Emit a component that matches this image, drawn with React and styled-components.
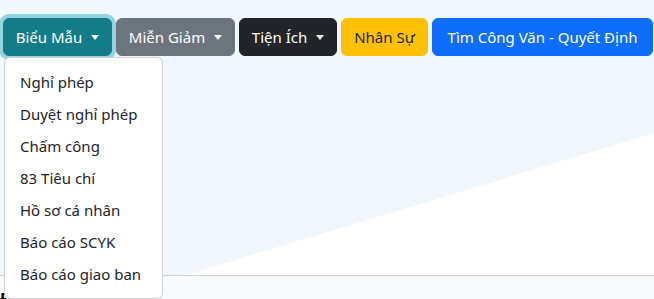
import React from 'react'
import styled, { createGlobalStyle } from 'styled-components'

const GlobalStyle = createGlobalStyle`
  html, body {
    margin: 0;
    padding: 0;
    background: #ffffff;
    font-family: "Noto Sans", "Open Sans", sans-serif;
    color: #212529;
  }
`;

const Page = styled.div`
  width: 654px;
  height: 299px;
  overflow: hidden;
  display: flex;
  flex-direction: column;
`;

const Hero = styled.section`
  position: relative;
  flex-shrink: 0;
  height: 275px;
  border-bottom: 1px solid #cfd2d5;
  background: #ffffff;

  &::before {
    content: '';
    position: absolute;
    inset: 0;
    background: #f0f7ff;
    clip-path: polygon(0 0, 100% 0, 100% 48.4%, 28.4% 100%, 0 100%);
  }
`;

const Toolbar = styled.nav`
  position: relative;
  display: flex;
  gap: 4px;
  padding: 18px 0 0 3px;
`;

const ButtonWrap = styled.div`
  position: relative;
`;

const palette = {
  info: { bg: '#127c88', fg: '#ffffff', ring: 'rgba(58, 176, 195, 0.5)' },
  secondary: { bg: '#6c757d', fg: '#ffffff' },
  dark: { bg: '#212529', fg: '#ffffff' },
  warning: { bg: '#ffc107', fg: '#212529' },
  primary: { bg: '#0d6efd', fg: '#ffffff' },
};

const Button = styled.button`
  display: flex;
  align-items: center;
  justify-content: center;
  box-sizing: border-box;
  width: ${p => p.$w}px;
  height: 38px;
  padding: 0 12px;
  border: 1px solid ${p => palette[p.$tone].bg};
  border-radius: 6px;
  background: ${p => palette[p.$tone].bg};
  color: ${p => palette[p.$tone].fg};
  font-family: inherit;
  font-size: 15px;
  line-height: 24px;
  white-space: nowrap;
  box-shadow: ${p => (p.$focus ? `0 0 0 4px ${palette[p.$tone].ring}` : 'none')};
`;

const Caret = styled.span`
  display: inline-block;
  margin-left: 9px;
  width: 0;
  height: 0;
  border-top: 5px solid currentColor;
  border-left: 4px solid transparent;
  border-right: 4px solid transparent;
`;

const Menu = styled.ul`
  position: absolute;
  top: 39px;
  left: 1px;
  z-index: 10;
  box-sizing: border-box;
  width: 159px;
  margin: 0;
  padding: 8px 0;
  list-style: none;
  background: #ffffff;
  border: 1px solid rgba(0, 0, 0, 0.175);
  border-radius: 6px;
`;

const MenuItem = styled.li`
  padding: 4px 15px;
  font-size: 15px;
  line-height: 24px;
  color: #212529;
  white-space: nowrap;
`;

const Footer = styled.footer`
  flex: 1;
  background: #f8f9fa;
  padding: 13px 0 0 0;
`;

const FooterTitle = styled.div`
  font-weight: 700;
  font-size: 16px;
  line-height: 20px;
  color: #000000;
`;

const buttons = [
  { label: 'Biểu Mẫu', tone: 'info', w: 109, caret: true, focus: true },
  { label: 'Miễn Giảm', tone: 'secondary', w: 119, caret: true },
  { label: 'Tiện Ích', tone: 'dark', w: 98, caret: true },
  { label: 'Nhân Sự', tone: 'warning', w: 87 },
  { label: 'Tìm Công Văn - Quyết Định', tone: 'primary', w: 221 },
];

const menuItems = [
  'Nghỉ phép',
  'Duyệt nghỉ phép',
  'Chấm công',
  '83 Tiêu chí',
  'Hồ sơ cá nhân',
  'Báo cáo SCYK',
  'Báo cáo giao ban',
];

export default function App() {
  return (
    <Page>
      <GlobalStyle />
      <Hero>
        <Toolbar>
          {buttons.map((b, i) => (
            <ButtonWrap key={b.label}>
              <Button $tone={b.tone} $w={b.w} $focus={b.focus}>
                {b.label}
                {b.caret && <Caret />}
              </Button>
              {i === 0 && (
                <Menu>
                  {menuItems.map(m => (
                    <MenuItem key={m}>{m}</MenuItem>
                  ))}
                </Menu>
              )}
            </ButtonWrap>
          ))}
        </Toolbar>
      </Hero>
      <Footer>
        <FooterTitle>Đầu tiên</FooterTitle>
      </Footer>
    </Page>
  )
}
